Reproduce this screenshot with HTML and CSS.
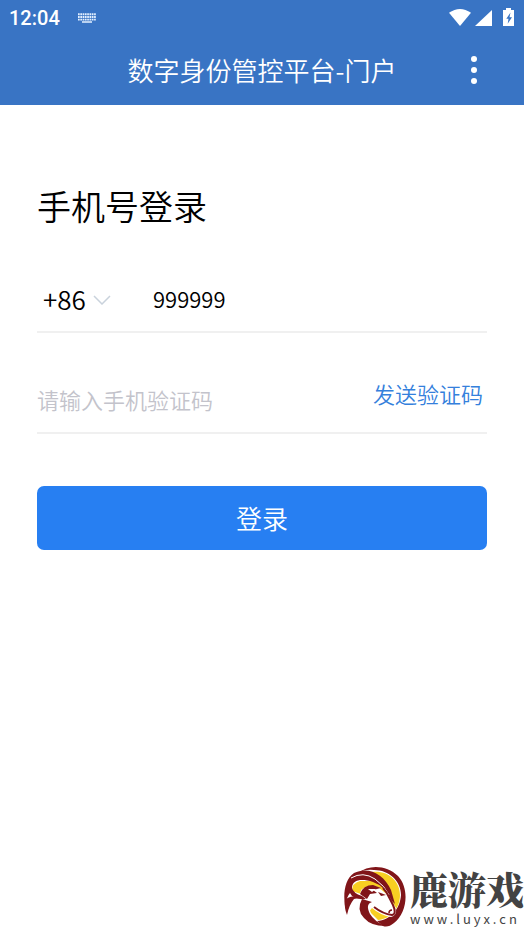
FILE: index.html
```html
<!DOCTYPE html>
<html lang="zh-CN">
<head>
<meta charset="utf-8">
<meta name="viewport" content="width=device-width, initial-scale=1">
<title>数字身份管控平台-门户</title>
<link rel="stylesheet" href="styles.css">
</head>
<body>
<header class="top">
  <div class="status">
    <span class="clock">12:04</span>
    <svg class="keyboard" width="18" height="10" viewBox="0 0 18 10" aria-hidden="true">
      <path d="M0 1.2h18M0 4h18M0 6.6h18" stroke="#e4f0ff" stroke-width="1.9" stroke-dasharray="1.7 .6" fill="none"/>
      <path d="M4 9h10" stroke="#e4f0ff" stroke-width="1.5"/>
    </svg>
    <svg class="signals" width="68" height="20" viewBox="0 0 68 20" aria-hidden="true">
      <path d="M1 4.8Q12 -2.8 23 4.8L12 18Z" fill="#fff"/>
      <path d="M27 18L44 2V18Z" fill="#fff"/>
      <path d="M58 0h5v2h3v16h-11V2h3z" fill="#fff"/>
      <path d="M62.500 4.500L58.300 10.800h2.200L59.700 15.800L64 9.300h-2.500z" fill="#3974c4"/>
    </svg>
  </div>
  <div class="bar">
    <h1 class="title">数字身份管控平台-门户</h1>
    <button class="more" type="button" aria-label="更多">
      <svg width="8" height="28" viewBox="0 0 8 28" fill="#fff"><circle cx="4" cy="3" r="3"/><circle cx="4" cy="14" r="3"/><circle cx="4" cy="25" r="3"/></svg>
    </button>
  </div>
</header>
<main class="content">
  <h2 class="heading">手机号登录</h2>
  <form class="form">
    <div class="row">
      <div class="region">
        <select class="code" aria-label="国家/地区代码"><option>+86</option></select>
        <svg class="chevron" width="18" height="10" viewBox="0 0 18 10" aria-hidden="true"><path d="M1 1l8 8 8-8" fill="none" stroke="#c9d2dc" stroke-width="1.500"/></svg>
      </div>
      <input class="field" type="tel" value="999999" aria-label="手机号">
    </div>
    <div class="row verify">
      <input class="field" type="text" placeholder="请输入手机验证码" aria-label="手机验证码">
      <button class="send" type="button">发送验证码</button>
    </div>
    <button class="submit" type="button">登录</button>
  </form>
</main>
<footer class="brand">
  <svg class="emblem" width="64" height="64" viewBox="0 0 64 64" aria-hidden="true">
    <path d="M14 8C25 -1 43 0 54 11C66 24 63 48 50 58Q44 63 39 61L33 56C47 55 56 44 57 30C57 16 45 5 30 5Q21 4 14 8Z" fill="#801519"/>
    <path d="M28 7C44 5 56 16 56 30C56 44 46 54 34 55L27 48L20 30L8 26Q8 18 16 16L30 16Z" fill="#f8cf22"/>
    <path d="M17 25Q24 19 34 22L45 31L52 43Q53 51 47 52Q36 50 28 43L22 50L14 37Z" fill="#fff"/>
    <path d="M1 41C-1 28 1 14 10 8C24 1 40 9 47 25L51 39L48 36Q41 21 29 17C17 13 8 15 8 23Q9 28 18 31L22 34Q9 35 6 28Q3 31 1 41Z" fill="#801519"/>
    <path d="M7 13Q19 6 31 14Q41 21 45 30" fill="none" stroke="#fff" stroke-width="1"/>
    <path d="M16 29Q19 20 29 20L37 23L29 25L33 28L26 29L23 34Z" fill="#801519"/>
    <path d="M24 24L32 24L28 27Z" fill="#fff"/>
    <path d="M34 27L42 30L37 31Z" fill="#801519"/>
    <path d="M39 23Q43 27 46 34L49 40Q53 49 48 50Q39 49 30 42" fill="none" stroke="#801519" stroke-width="2"/>
    <path d="M45 48Q45 45 48 45" fill="none" stroke="#801519" stroke-width="1.500"/>
    <path d="M1 35Q7 29 15 33L10 34Q5 40 3 50Q0 43 1 35Z" fill="#801519"/>
    <path d="M18 34L28 37Q21 39 26 49Q30 56 41 61Q27 61 20 53Q12 45 18 34Z" fill="#801519"/>
  </svg>
  <div class="wordmark">
    <span class="name">鹿游戏</span>
    <span class="site">www.luyx.cn</span>
  </div>
</footer>
</body>
</html>
```
FILE: styles.css
```css
* {
  box-sizing: border-box;
}

body {
  margin: 0;
  min-height: 100vh;
  display: flex;
  flex-direction: column;
  background: #fff;
  color: #000;
  font-family: "Noto Sans CJK SC", sans-serif;
  font-weight: 350;
}

button,
input,
select {
  margin: 0;
  padding: 0;
  border: 0;
  background: none;
  color: inherit;
  font: inherit;
}

.top {
  background: #3974c4;
  color: #fff;
}

.status {
  display: flex;
  align-items: center;
  height: 36px;
  padding: 0 8px 0 9px;
}

.clock {
  font: 500 20px/24px Roboto, sans-serif;
}

.keyboard {
  margin-left: 18px;
}

.signals {
  margin-left: auto;
}

.bar {
  display: grid;
  grid-template-columns: 56px 1fr 56px;
  align-items: center;
  height: 69px;
  padding: 0 22px 2px;
}

.title {
  grid-column: 2;
  margin: 0;
  font-size: 26px;
  font-weight: inherit;
  line-height: 36px;
  text-align: center;
}

.more {
  display: flex;
  justify-content: center;
  padding: 8px;
}

.content {
  padding: 76px 37px 40px;
}

.heading {
  margin: 0;
  font-size: 34px;
  font-weight: inherit;
  line-height: 50px;
}

.form {
  display: flex;
  flex-direction: column;
  padding-top: 37px;
}

.row {
  display: flex;
  align-items: center;
  height: 65px;
  padding-bottom: 3px;
  border-bottom: 2px solid #f0f0f0;
}

.region {
  display: flex;
  align-items: center;
  width: 116px;
  padding-left: 6px;
}

.code {
  appearance: none;
  width: 50px;
  font-size: 26px;
}

.chevron {
  margin-top: 4px;
}

.field {
  flex: 1;
  min-width: 0;
  font-size: 22px;
  outline: 0;
}

.field::placeholder {
  color: #c3c3cb;
  opacity: 1;
}

.verify {
  margin-top: 36px;
}

.send {
  align-self: flex-start;
  padding: 8px 4px;
  color: #3480dc;
  font-size: 22px;
}

.submit {
  height: 64px;
  margin-top: 52px;
  padding-bottom: 2px;
  border-radius: 7px;
  background: #277ff2;
  color: #fff;
  font-size: 26px;
}

.brand {
  display: flex;
  justify-content: flex-end;
  align-items: flex-end;
  gap: 2px;
  margin-top: auto;
  padding-bottom: 4px;
}

.wordmark {
  display: flex;
  flex-direction: column;
  padding-bottom: 2px;
  color: #434343;
}

.name {
  font-family: "Noto Serif CJK SC", "Noto Sans CJK SC", serif;
  font-size: 38px;
  font-weight: 900;
  line-height: 46px;
}

.site {
  font-size: 13px;
  font-weight: 400;
  line-height: 16px;
  letter-spacing: 3px;
}
```
